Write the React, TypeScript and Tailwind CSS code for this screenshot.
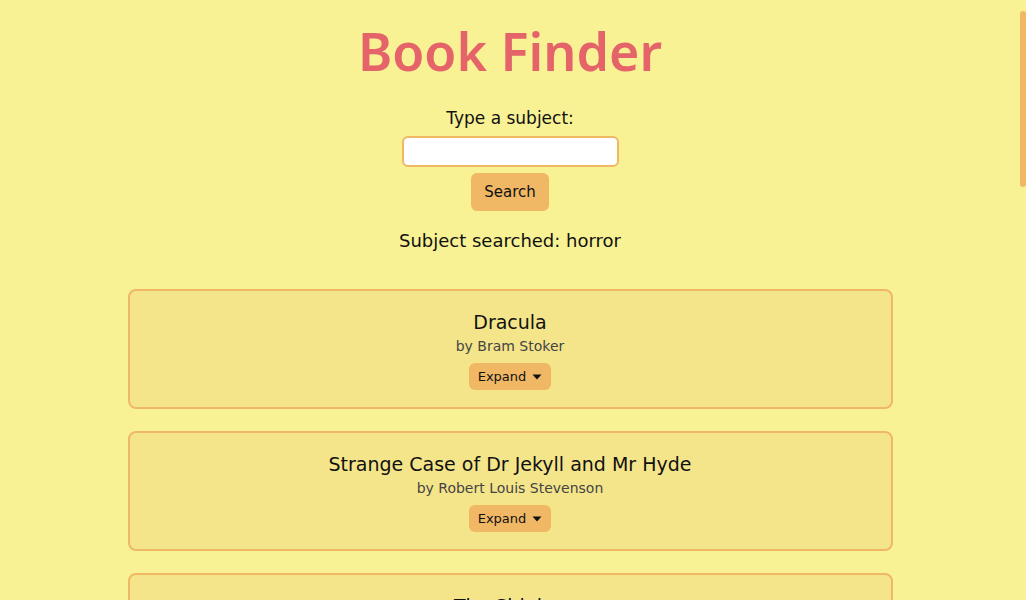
import { useState } from "react";

type Book = { title: string; author: string };

const BOOKS: Book[] = [
  { title: "Dracula", author: "Bram Stoker" },
  { title: "Strange Case of Dr Jekyll and Mr Hyde", author: "Robert Louis Stevenson" },
  { title: "The Shining", author: "Stephen King" },
  { title: "Frankenstein", author: "Mary Shelley" },
  { title: "The Haunting of Hill House", author: "Shirley Jackson" },
  { title: "The Turn of the Screw", author: "Henry James" },
  { title: "Carrie", author: "Stephen King" },
  { title: "The Picture of Dorian Gray", author: "Oscar Wilde" },
  { title: "The Legend of Sleepy Hollow", author: "Washington Irving" },
  { title: "Pet Sematary", author: "Stephen King" },
  { title: "The Call of Cthulhu", author: "H. P. Lovecraft" },
  { title: "Rebecca", author: "Daphne du Maurier" },
];

function Caret() {
  return (
    <svg width="10" height="6" viewBox="0 0 10 6" className="ml-[6px]">
      <path d="M0.5 0.5 H9.5 L5 5.5 Z" fill="#111" />
    </svg>
  );
}

function BookCard({ book }: { book: Book }) {
  const [open, setOpen] = useState(false);
  return (
    <div className="flex w-full flex-col items-center rounded-lg border-2 border-[#f0b865] bg-[#f5e58a] pt-[17px] pb-[17px]">
      <h2 className="text-[19px] leading-[28px] text-[#111]">{book.title}</h2>
      <p className="text-[14px] leading-[21px] text-[#444]">by {book.author}</p>
      <button
        type="button"
        onClick={() => setOpen((o) => !o)}
        className="mt-[6px] flex h-[27px] items-center rounded-md bg-[#f0b865] px-[9px] text-[13px] leading-[27px] text-[#111]"
      >
        Expand
        <Caret />
      </button>
    </div>
  );
}

export default function App() {
  return (
    <div
      className="flex h-screen overflow-hidden bg-[#f8f294]"
      style={{ fontFamily: '"DejaVu Sans", "Liberation Sans", sans-serif' }}
    >
      <main className="flex-1 overflow-y-auto [scrollbar-width:none]">
        <div className="flex flex-col items-center pb-10">
          <h1
            className="mt-[20px] text-[52px] leading-[62px] font-semibold text-[#e4646a]"
            style={{ fontFamily: '"Noto Sans", sans-serif' }}
          >
            Book Finder
          </h1>
          <label className="mt-[24px] text-[17px] leading-[24px] text-[#111]">Type a subject:</label>
          <input
            type="text"
            className="mt-[6px] h-[31px] w-[217px] rounded-md border-2 border-[#f0b865] bg-white px-2 text-[14px] outline-none"
          />
          <button
            type="button"
            className="mt-[6px] h-[38px] w-[78px] rounded-md bg-[#f0b865] text-[15px] text-[#111]"
          >
            Search
          </button>
          <p className="mt-[16px] text-[18px] leading-[27px] text-[#111]">Subject searched: horror</p>
          <div className="mt-[35px] flex w-3/4 flex-col gap-[22px]">
            {BOOKS.map((b) => (
              <BookCard key={b.title} book={b} />
            ))}
          </div>
        </div>
      </main>
      {/* scrollbar */}
      <div className="w-[6px] shrink-0 pt-[11px]">
        <div className="h-[176px] rounded-full bg-[#f0b865]" />
      </div>
    </div>
  );
}
